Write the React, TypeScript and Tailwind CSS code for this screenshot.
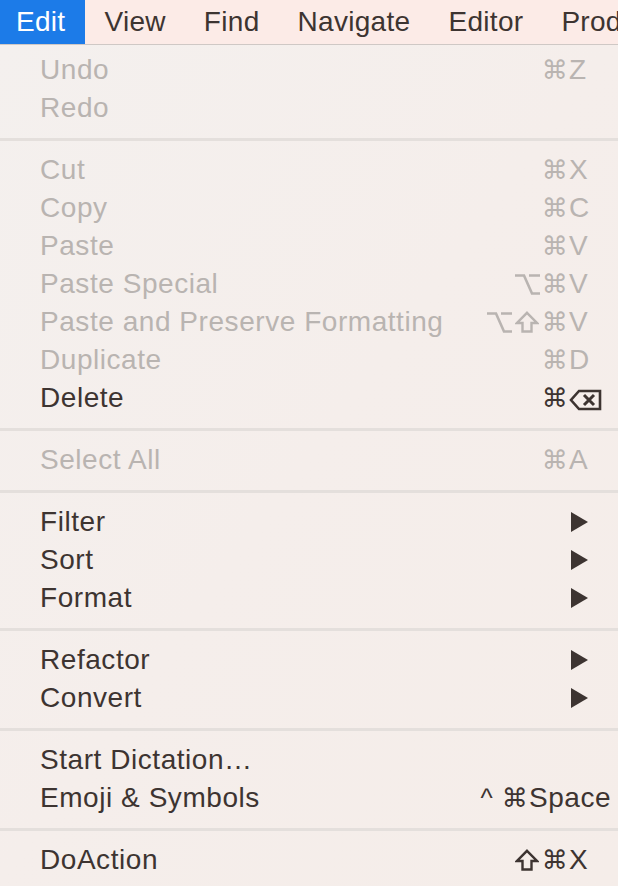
import React from 'react';

type Item = {
  label: string;
  disabled?: boolean;
  mods?: string[];
  keyLabel?: React.ReactNode;
  keyWidth?: string;
  submenu?: boolean;
};

type Entry = Item | 'sep';

const entries: Entry[] = [
  { label: 'Undo', disabled: true, mods: ['cmd'], keyLabel: 'Z' },
  { label: 'Redo', disabled: true },
  'sep',
  { label: 'Cut', disabled: true, mods: ['cmd'], keyLabel: 'X' },
  { label: 'Copy', disabled: true, mods: ['cmd'], keyLabel: 'C' },
  { label: 'Paste', disabled: true, mods: ['cmd'], keyLabel: 'V' },
  { label: 'Paste Special', disabled: true, mods: ['opt', 'cmd'], keyLabel: 'V' },
  { label: 'Paste and Preserve Formatting', disabled: true, mods: ['opt', 'shift', 'cmd'], keyLabel: 'V' },
  { label: 'Duplicate', disabled: true, mods: ['cmd'], keyLabel: 'D' },
  { label: 'Delete', mods: ['cmd'], keyLabel: 'backspace' },
  'sep',
  { label: 'Select All', disabled: true, mods: ['cmd'], keyLabel: 'A' },
  'sep',
  { label: 'Filter', submenu: true },
  { label: 'Sort', submenu: true },
  { label: 'Format', submenu: true },
  'sep',
  { label: 'Refactor', submenu: true },
  { label: 'Convert', submenu: true },
  'sep',
  { label: 'Start Dictation…' },
  { label: 'Emoji & Symbols', mods: ['ctrl', 'cmd'], keyLabel: 'Space', keyWidth: 'w-[89px]' },
  'sep',
  { label: 'DoAction', mods: ['shift', 'cmd'], keyLabel: 'X' },
];

const menus = ['View', 'Find', 'Navigate', 'Editor', 'Product'];

function BackspaceKey() {
  return (
    <svg width="33" height="22" viewBox="0 0 33 22" className="inline-block">
      <path d="M10 2 H31 V20 H10 L2 11 Z" fill="none" stroke="currentColor" strokeWidth="2.6" />
      <path d="M15 6 L25 16 M25 6 L15 16" stroke="currentColor" strokeWidth="3" />
    </svg>
  );
}

function OptionKey() {
  return (
    <svg width="25" height="21" viewBox="0 0 25 21">
      <path d="M0 1.5 H9 L17 19.5 H25 M14 1.5 H25" fill="none" stroke="currentColor" strokeWidth="2.6" />
    </svg>
  );
}

function ShiftKey() {
  return (
    <svg width="24" height="22" viewBox="0 0 24 22">
      <path d="M12 1.8 L22 12 H16.5 V20.5 H7.5 V12 H2 Z" fill="none" stroke="currentColor" strokeWidth="2.4" strokeLinejoin="miter" />
    </svg>
  );
}

function Mod({ name }: { name: string }) {
  if (name === 'opt') return <OptionKey />;
  if (name === 'shift') return <ShiftKey />;
  if (name === 'ctrl') return <span className="text-[26px]">^</span>;
  return <span className="font-['DejaVu_Sans',sans-serif] text-[26px] leading-none">⌘</span>;
}

function Arrow() {
  return (
    <svg width="17" height="20" viewBox="0 0 17 20">
      <path d="M0 0 L17 10 L0 20 Z" fill="currentColor" />
    </svg>
  );
}

function Row({ item }: { item: Item }) {
  const color = item.disabled ? 'text-[#b9b4b1]' : 'text-[#3d3431]';
  return (
    <div className={`flex h-[38px] items-center pl-[40px] ${color}`}>
      <span className="flex-1 whitespace-nowrap">{item.label}</span>
      {item.submenu && (
        <span className="mr-[30px] flex items-center">
          <Arrow />
        </span>
      )}
      {item.keyLabel && (
        <span className="flex items-center">
          {item.mods?.map((m, i) => (
            <span key={i} className="flex w-[28px] items-center justify-center">
              <Mod name={m} />
            </span>
          ))}
          <span className={`${item.keyWidth ?? 'w-[49px]'} whitespace-nowrap`}>
            {item.keyLabel === 'backspace' ? <BackspaceKey /> : item.keyLabel}
          </span>
        </span>
      )}
    </div>
  );
}

export default function App() {
  return (
    <div className="h-[886px] w-[618px] overflow-hidden bg-[#f4efed] font-['Liberation_Sans',Arial,sans-serif] text-[28px] tracking-[0.55px]">
      <div className="flex h-[45px] border-b border-[#cfc8c5] bg-[#fcebe7] text-[28px] tracking-[0.3px] text-[#3d3431]">
        <div className="flex items-center bg-[#1c7be8] pl-[16px] pr-[20px] text-white">Edit</div>
        {menus.map((m) => (
          <div key={m} className="flex items-center whitespace-nowrap px-[19px]">
            {m}
          </div>
        ))}
      </div>
      <div className="bg-gradient-to-br from-[#f4f0ee] via-[#f5eeeb] to-[#f5ede9] pt-[6px]">
        {entries.map((e, i) =>
          e === 'sep' ? (
            <div key={i} className="flex h-[24px] items-center">
              <div className="h-[3px] w-full bg-[#e4dfdc]" />
            </div>
          ) : (
            <Row key={i} item={e} />
          ),
        )}
        <div className="h-[10px]" />
      </div>
    </div>
  );
}
